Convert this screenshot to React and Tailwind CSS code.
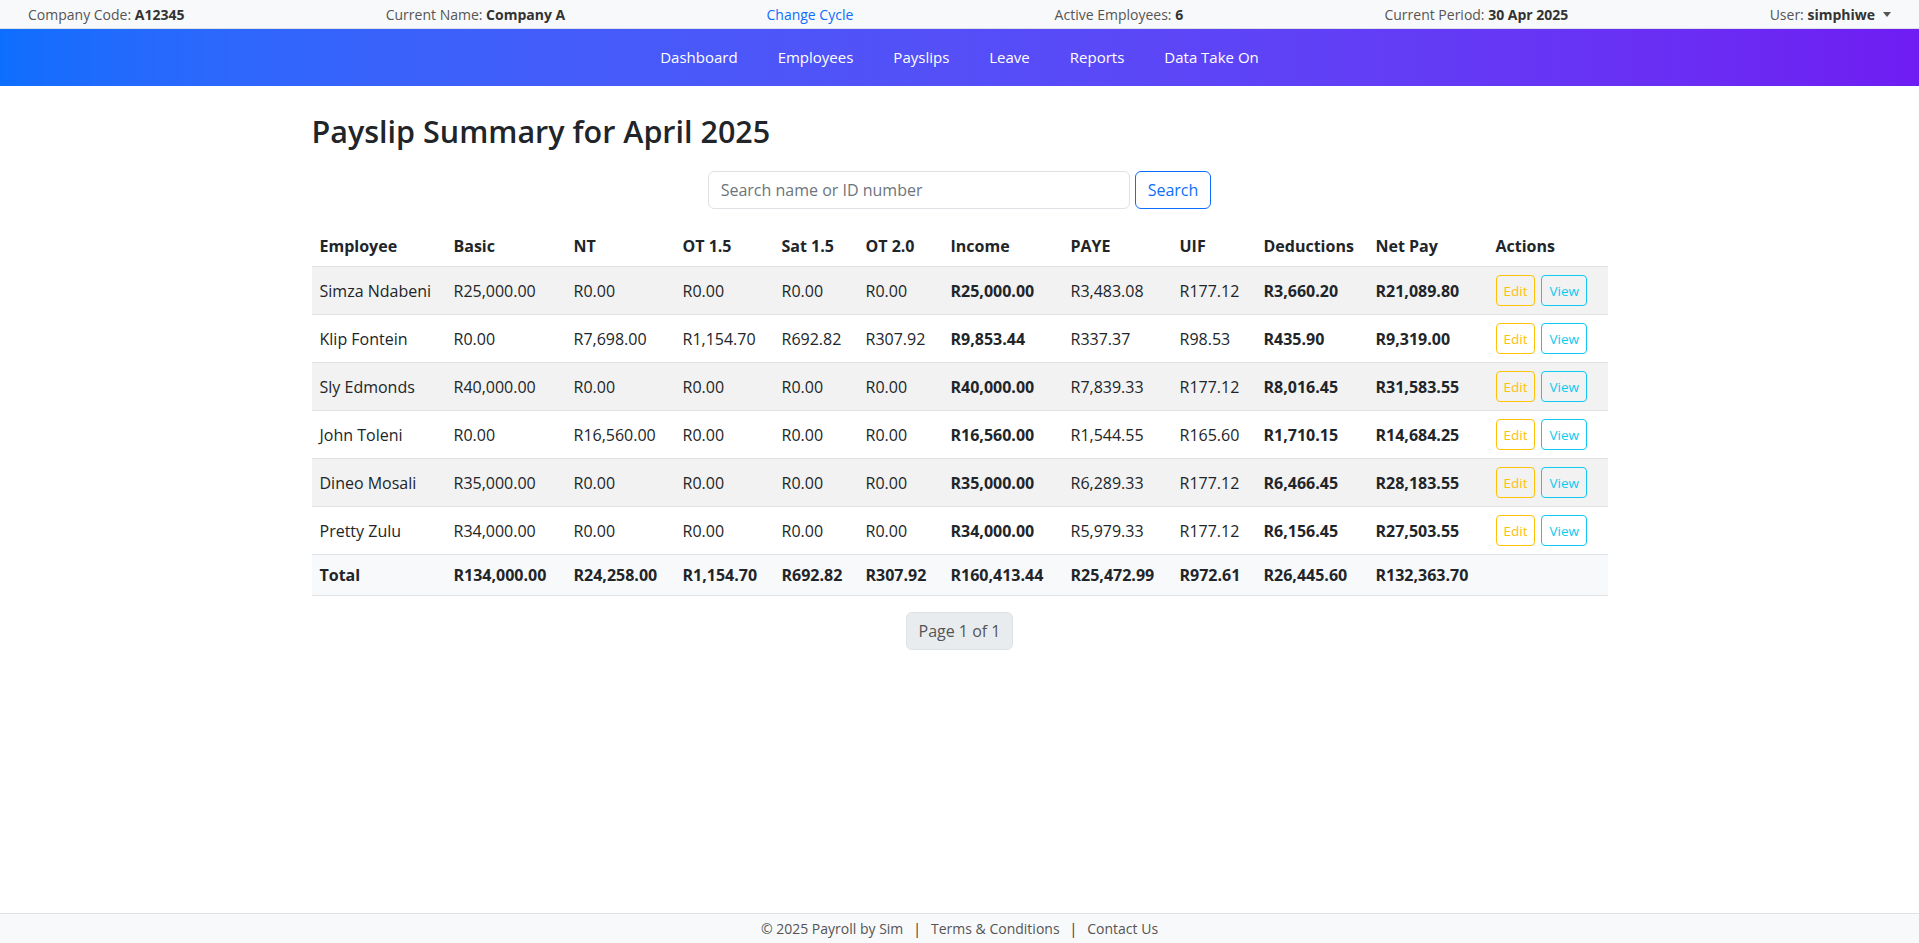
// Payslip summary page: top info bar, gradient nav, payslip table, footer
const rows = [
  { name: 'Simza Ndabeni', basic: 'R25,000.00', nt: 'R0.00', ot15: 'R0.00', sat: 'R0.00', ot2: 'R0.00', income: 'R25,000.00', paye: 'R3,483.08', uif: 'R177.12', ded: 'R3,660.20', net: 'R21,089.80' },
  { name: 'Klip Fontein', basic: 'R0.00', nt: 'R7,698.00', ot15: 'R1,154.70', sat: 'R692.82', ot2: 'R307.92', income: 'R9,853.44', paye: 'R337.37', uif: 'R98.53', ded: 'R435.90', net: 'R9,319.00' },
  { name: 'Sly Edmonds', basic: 'R40,000.00', nt: 'R0.00', ot15: 'R0.00', sat: 'R0.00', ot2: 'R0.00', income: 'R40,000.00', paye: 'R7,839.33', uif: 'R177.12', ded: 'R8,016.45', net: 'R31,583.55' },
  { name: 'John Toleni', basic: 'R0.00', nt: 'R16,560.00', ot15: 'R0.00', sat: 'R0.00', ot2: 'R0.00', income: 'R16,560.00', paye: 'R1,544.55', uif: 'R165.60', ded: 'R1,710.15', net: 'R14,684.25' },
  { name: 'Dineo Mosali', basic: 'R35,000.00', nt: 'R0.00', ot15: 'R0.00', sat: 'R0.00', ot2: 'R0.00', income: 'R35,000.00', paye: 'R6,289.33', uif: 'R177.12', ded: 'R6,466.45', net: 'R28,183.55' },
  { name: 'Pretty Zulu', basic: 'R34,000.00', nt: 'R0.00', ot15: 'R0.00', sat: 'R0.00', ot2: 'R0.00', income: 'R34,000.00', paye: 'R5,979.33', uif: 'R177.12', ded: 'R6,156.45', net: 'R27,503.55' },
];

const headers = ['Employee', 'Basic', 'NT', 'OT 1.5', 'Sat 1.5', 'OT 2.0', 'Income', 'PAYE', 'UIF', 'Deductions', 'Net Pay', 'Actions'];
const widths = [134, 120, 109, 99, 84, 85, 120, 109, 84, 112, 120, 120];

const navLinks = ['Dashboard', 'Employees', 'Payslips', 'Leave', 'Reports', 'Data Take On'];

function TopBar() {
  return (
    <div className="flex items-center justify-between h-[29px] px-[28px] bg-[#f8f9fa] border-b border-[#dee2e6] text-[14px] text-[#555]">
      <span>Company Code: <b className="font-bold text-[#333]">A12345</b></span>
      <span>Current Name: <b className="font-bold text-[#333]">Company A</b></span>
      <a className="text-[#0d6efd]">Change Cycle</a>
      <span>Active Employees: <b className="font-bold text-[#333]">6</b></span>
      <span>Current Period: <b className="font-bold text-[#333]">30 Apr 2025</b></span>
      <span className="flex items-center">
        User:&nbsp;<b className="font-bold text-[#333]">simphiwe</b>
        <span className="ml-[8px] w-0 h-0 border-l-[4px] border-r-[4px] border-t-[5px] border-l-transparent border-r-transparent border-t-[#555]" />
      </span>
    </div>
  );
}

function NavBar() {
  return (
    <nav className="h-[57px] flex items-center justify-center bg-gradient-to-r from-[#0d6efd] to-[#6f1cf2]">
      {navLinks.map((l) => (
        <a key={l} className="px-[20px] text-[15px] text-white">{l}</a>
      ))}
    </nav>
  );
}

function PayslipTable() {
  const cell = 'px-2 py-2 text-left align-middle';
  return (
    <table className="w-full table-fixed border-collapse text-[16px] text-[#212529]">
      <colgroup>
        {widths.map((w, i) => <col key={i} style={{ width: w }} />)}
      </colgroup>
      <thead>
        <tr className="border-b border-[#dee2e6]">
          {headers.map((h) => (
            <th key={h} className={`${cell} font-bold`}>{h}</th>
          ))}
        </tr>
      </thead>
      <tbody>
        {rows.map((r, i) => (
          <tr key={r.name} className={`border-b border-[#dee2e6] ${i % 2 === 0 ? 'bg-[#f2f2f2]' : 'bg-white'}`}>
            <td className={cell}>{r.name}</td>
            <td className={cell}>{r.basic}</td>
            <td className={cell}>{r.nt}</td>
            <td className={cell}>{r.ot15}</td>
            <td className={cell}>{r.sat}</td>
            <td className={cell}>{r.ot2}</td>
            <td className={`${cell} font-bold`}>{r.income}</td>
            <td className={cell}>{r.paye}</td>
            <td className={cell}>{r.uif}</td>
            <td className={`${cell} font-bold`}>{r.ded}</td>
            <td className={`${cell} font-bold`}>{r.net}</td>
            <td className={cell}>
              <div className="flex gap-[6px]">
                <button className="h-[31px] px-[7px] rounded-[4px] border border-[#ffc107] text-[#ffc107] text-[13.5px]">Edit</button>
                <button className="h-[31px] px-[7px] rounded-[4px] border border-[#0dcaf0] text-[#0dcaf0] text-[13.5px]">View</button>
              </div>
            </td>
          </tr>
        ))}
        <tr className="border-b border-[#dee2e6] bg-[#f8f9fa] font-bold">
          <td className={cell}>Total</td>
          <td className={cell}>R134,000.00</td>
          <td className={cell}>R24,258.00</td>
          <td className={cell}>R1,154.70</td>
          <td className={cell}>R692.82</td>
          <td className={cell}>R307.92</td>
          <td className={cell}>R160,413.44</td>
          <td className={cell}>R25,472.99</td>
          <td className={cell}>R972.61</td>
          <td className={cell}>R26,445.60</td>
          <td className={cell}>R132,363.70</td>
          <td className={cell}></td>
        </tr>
      </tbody>
    </table>
  );
}

export default function App() {
  return (
    <div className="min-h-screen flex flex-col bg-white font-['Open_Sans',sans-serif]">
      <TopBar />
      <NavBar />
      <main className="flex-1 w-[1296px] mx-auto">
        <h2 className="mt-[26px] text-[30.5px] leading-[1.25] font-semibold text-[#212529]">Payslip Summary for April 2025</h2>
        <form className="mt-[21px] flex justify-center gap-[5px]" onSubmit={(e) => e.preventDefault()}>
          <input
            placeholder="Search name or ID number"
            className="w-[422px] h-[38px] px-3 rounded-[6px] border border-[#dee2e6] text-[16px] placeholder:text-[#6c757d] outline-none"
          />
          <button className="h-[38px] px-3 rounded-[6px] border border-[#0d6efd] text-[#0d6efd] text-[16px]">Search</button>
        </form>
        <div className="mt-[17px]">
          <PayslipTable />
        </div>
        <div className="mt-4 flex justify-center">
          <span className="h-[38px] px-3 flex items-center rounded-[6px] border border-[#dee2e6] bg-[#e9ecef] text-[16px] text-[#555]">Page 1 of 1</span>
        </div>
      </main>
      <footer className="h-[30px] flex items-center justify-center bg-[#f8f9fa] border-t border-[#dee2e6] text-[14px] text-[#555]">
        <span>© 2025 Payroll by Sim</span>
        <span className="mx-[10px] text-[#333]">|</span>
        <a>Terms &amp; Conditions</a>
        <span className="mx-[10px] text-[#333]">|</span>
        <a>Contact Us</a>
      </footer>
    </div>
  );
}
